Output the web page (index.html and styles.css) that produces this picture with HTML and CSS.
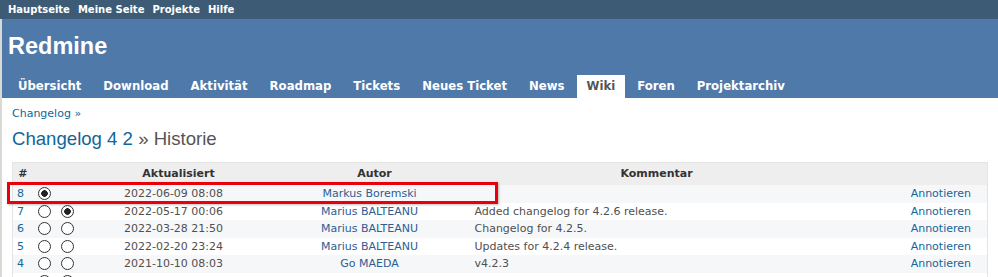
FILE: index.html
```html
<!DOCTYPE html>
<html lang="de">
<head>
<meta charset="utf-8">
<title>Changelog 4 2 - Historie - Redmine</title>
<link rel="stylesheet" href="styles.css">
</head>
<body>
<div id="top-menu">
  <a href="#">Hauptseite</a>
  <a href="#">Meine Seite</a>
  <a href="#">Projekte</a>
  <a href="#">Hilfe</a>
</div>
<div class="wrapper">
  <div id="header">
    <h1 class="site-title">Redmine</h1>
    <ul class="main-menu">
      <li><a href="#">Übersicht</a></li>
      <li><a href="#">Download</a></li>
      <li><a href="#">Aktivität</a></li>
      <li><a href="#">Roadmap</a></li>
      <li><a href="#">Tickets</a></li>
      <li><a href="#">Neues Ticket</a></li>
      <li><a href="#">News</a></li>
      <li><a href="#" class="selected">Wiki</a></li>
      <li><a href="#">Foren</a></li>
      <li><a href="#">Projektarchiv</a></li>
    </ul>
  </div>
  <div id="content">
    <p class="breadcrumb"><a href="#">Changelog</a> »</p>
    <h2><a href="#">Changelog 4 2</a> » Historie</h2>
    <table class="list">
      <colgroup>
        <col class="c-id"><col class="c-r1"><col class="c-r2"><col class="c-date"><col class="c-author"><col class="c-comment"><col class="c-buttons">
      </colgroup>
      <thead>
        <tr><th>#</th><th></th><th></th><th class="shift">Aktualisiert</th><th class="shift">Autor</th><th>Kommentar</th><th></th></tr>
      </thead>
      <tbody>
        <tr class="odd"><td class="id"><a href="#">8</a></td><td><input type="radio" name="a" checked></td><td></td><td>2022-06-09 08:08</td><td><a href="#">Markus Boremski</a></td><td class="comments"></td><td class="buttons"><a href="#">Annotieren</a></td></tr>
        <tr class="even"><td class="id"><a href="#">7</a></td><td><input type="radio" name="a"></td><td><input type="radio" name="b" checked></td><td>2022-05-17 00:06</td><td><a href="#">Marius BALTEANU</a></td><td class="comments">Added changelog for 4.2.6 release.</td><td class="buttons"><a href="#">Annotieren</a></td></tr>
        <tr class="odd"><td class="id"><a href="#">6</a></td><td><input type="radio" name="a"></td><td><input type="radio" name="b"></td><td>2022-03-28 21:50</td><td><a href="#">Marius BALTEANU</a></td><td class="comments">Changelog for 4.2.5.</td><td class="buttons"><a href="#">Annotieren</a></td></tr>
        <tr class="even"><td class="id"><a href="#">5</a></td><td><input type="radio" name="a"></td><td><input type="radio" name="b"></td><td>2022-02-20 23:24</td><td><a href="#">Marius BALTEANU</a></td><td class="comments">Updates for 4.2.4 release.</td><td class="buttons"><a href="#">Annotieren</a></td></tr>
        <tr class="odd"><td class="id"><a href="#">4</a></td><td><input type="radio" name="a"></td><td><input type="radio" name="b"></td><td>2021-10-10 08:03</td><td><a href="#">Go MAEDA</a></td><td class="comments">v4.2.3</td><td class="buttons"><a href="#">Annotieren</a></td></tr>
        <tr class="even"><td class="id"><a href="#">3</a></td><td><input type="radio" name="a"></td><td><input type="radio" name="b"></td><td>2021-09-21 09:24</td><td><a href="#">Marius BALTEANU</a></td><td class="comments">Updates for 4.2.3 release.</td><td class="buttons"><a href="#">Annotieren</a></td></tr>
      </tbody>
    </table>
  </div>
</div>
<div class="highlight"></div>
</body>
</html>
```

FILE: styles.css
```css
html, body {
  margin: 0;
  padding: 0;
  background: #fff;
}
body {
  position: relative;
  font-family: "DejaVu Sans", Verdana, sans-serif;
  font-size: 12px;
  color: #333;
  overflow: hidden;
  height: 277px;
}
a {
  color: #169;
  text-decoration: none;
}

#top-menu {
  background: #3e5b76;
  height: 19px;
  padding: 0 0 0 8px;
  display: flex;
  align-items: center;
  gap: 8px;
  font-size: 10px;
  font-weight: bold;
}
#top-menu a {
  color: #fff;
}

.wrapper {
  border-left: 2px solid #d9d9d6;
  height: 258px;
  overflow: hidden;
}

#header {
  background: #4f79a9;
  height: 79px;
  display: flex;
  flex-direction: column;
  justify-content: space-between;
  color: #fff;
}
.site-title {
  margin: 0;
  padding: 14px 0 0 6px;
  font-family: "Liberation Sans", Arial, sans-serif;
  font-size: 23.5px;
  line-height: 26px;
  font-weight: bold;
}
.main-menu {
  list-style: none;
  margin: 0 0 0 6px;
  padding: 0;
  display: flex;
  gap: 2px;
}
.main-menu a {
  display: block;
  padding: 4px 10px;
  line-height: 15px;
  color: #fff;
  font-weight: bold;
  font-size: 11.7px;
}
.main-menu a.selected {
  background: #fff;
  color: #555;
}

#content {
  padding: 9px 10px 0 10px;
}
.breadcrumb {
  margin: 0;
  font-size: 11px;
  line-height: 14px;
  color: #169;
}
h2 {
  margin: 7px 0 12px 0;
  font-family: "Liberation Sans", Arial, sans-serif;
  font-size: 18.6px;
  line-height: 22px;
  font-weight: normal;
  color: #555;
}

table.list {
  width: 100%;
  table-layout: fixed;
  border-collapse: collapse;
  border: 1px solid #e4e4e4;
  font-size: 11px;
}
.c-id { width: 20px; }
.c-r1 { width: 24px; }
.c-r2 { width: 22px; }
.c-date { width: 190px; }
.c-author { width: 202px; }
.c-comment { width: 372px; }
table.list th {
  background: #eee;
  padding: 4px 4px;
  line-height: 14px;
  font-weight: bold;
  color: #333;
  text-align: center;
}
table.list th.shift {
  padding-left: 14px;
}
table.list td {
  padding: 0 4px;
  line-height: 17.5px;
  height: 17.5px;
  text-align: center;
  color: #505050;
  white-space: nowrap;
  overflow: hidden;
}
table.list tr.odd td { background: #f6f7f8; }
table.list tr.even td { background: #fff; }
table.list td.id { text-align: left; padding-left: 4px; }
table.list td.comments { text-align: left; }
table.list td.buttons { text-align: right; padding-right: 16px; }
table.list td a { color: #2d5d93; }
table.list td.id a, table.list td.buttons a { color: #169; }

input[type="radio"] {
  -webkit-appearance: none;
  appearance: none;
  display: block;
  width: 13px;
  height: 13px;
  margin: 0 auto;
  border: 1px solid #333;
  border-radius: 50%;
  background: #fff;
  box-sizing: border-box;
}
input[type="radio"]:checked {
  background: radial-gradient(circle, #222 0 3px, #fff 3.6px);
}

.highlight {
  position: absolute;
  left: 7px;
  top: 182px;
  width: 491px;
  height: 22px;
  box-sizing: border-box;
  border: 3px solid #e8000b;
  box-shadow: 1px 1px 2px rgba(0,0,0,0.25);
  pointer-events: none;
}
```
